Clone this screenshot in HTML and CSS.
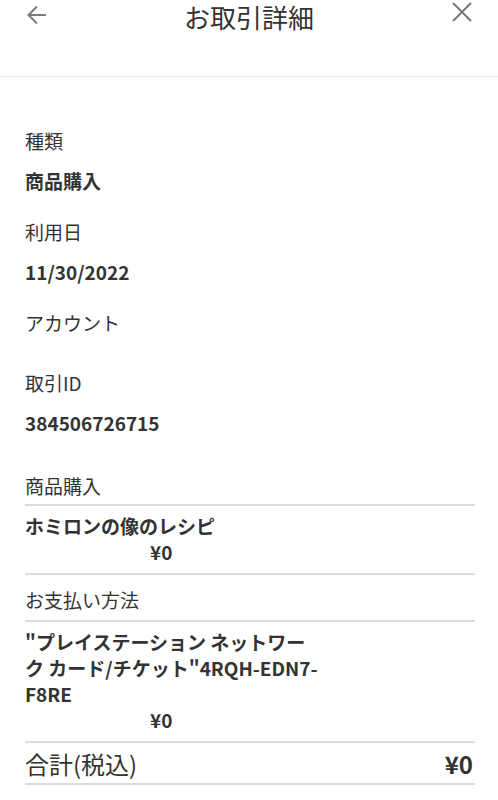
FILE: index.html
```html
<!DOCTYPE html>
<html lang="ja">
<head>
<meta charset="UTF-8">
<title>お取引詳細</title>
<link rel="stylesheet" href="styles.css">
</head>
<body>
<div class="header">
    <button class="icon-btn back" aria-label="戻る">
        <svg width="22" height="22" viewBox="0 0 22 22"><path d="M20 11H3M11 2.5L2.5 11L11 19.5" fill="none" stroke="#7a7a7a" stroke-width="2"/></svg>
    </button>
    <div class="title">お取引詳細</div>
    <button class="icon-btn close" aria-label="閉じる">
        <svg width="22" height="22" viewBox="0 0 22 22"><path d="M2 2L20 20M20 2L2 20" fill="none" stroke="#7a7a7a" stroke-width="2"/></svg>
    </button>
</div>

<div class="content">
    <div class="field">
        <div class="label">種類</div>
        <div class="value">商品購入</div>
    </div>
    <div class="field">
        <div class="label">利用日</div>
        <div class="value">11/30/2022</div>
    </div>
    <div class="field field-empty">
        <div class="label">アカウント</div>
    </div>
    <div class="field">
        <div class="label">取引ID</div>
        <div class="value">384506726715</div>
    </div>

    <div class="section-head">商品購入</div>
    <div class="row">
        <div class="name">ホミロンの像のレシピ</div>
        <div class="price">¥0</div>
    </div>

    <div class="section-head">お支払い方法</div>
    <div class="row">
        <div class="name">"プレイステーション ネットワーク カード/チケット"4RQH-EDN7-F8RE</div>
        <div class="price">¥0</div>
    </div>

    <div class="total">
        <span>合計(税込)</span>
        <span class="total-amount">¥0</span>
    </div>
</div>
</body>
</html>
```

FILE: styles.css
```css
body {
    margin: 0;
    background-color: #fff;
    color: #333;
    font-family: "Noto Sans CJK JP", "Noto Sans", sans-serif;
}

.header {
    display: grid;
    grid-template-columns: 1fr auto 1fr;
    height: 76px;
    border-bottom: 1px solid #e8e8e8;
}

.icon-btn {
    background: none;
    border: none;
    padding: 0;
    cursor: pointer;
    width: 22px;
    height: 22px;
}

.icon-btn svg {
    display: block;
}

.back {
    margin: 4px 0 0 26px;
}

.close {
    justify-self: end;
    margin: 1px 25px 0 0;
}

.title {
    font-size: 26px;
    line-height: 34px;
    color: #333;
}

.content {
    padding: 44px 23px 0 25px;
}

.field {
    padding-bottom: 11px;
}

.field-empty {
    padding-bottom: 20px;
}

.label {
    font-size: 19px;
    line-height: 40px;
}

.value {
    font-size: 19px;
    line-height: 40px;
    font-weight: bold;
}

.section-head {
    font-size: 19px;
    line-height: 36px;
    border-bottom: 2px solid #dcdcdc;
    margin-top: 14px;
}

.section-head + .row {
    padding: 7px 0 8px;
}

.row {
    border-bottom: 2px solid #dcdcdc;
    font-size: 19px;
    line-height: 26px;
    font-weight: bold;
    padding: 7px 0 9px;
}

.row + .section-head {
    margin-top: 5px;
    line-height: 40px;
}

.name {
    max-width: 295px;
}

.price {
    padding-left: 125px;
}

.total {
    display: flex;
    justify-content: space-between;
    align-items: center;
    height: 40px;
    font-size: 24px;
    border-bottom: 2px solid #dcdcdc;
}

.total-amount {
    font-weight: bold;
    font-size: 24px;
    padding-right: 2px;
}
```
